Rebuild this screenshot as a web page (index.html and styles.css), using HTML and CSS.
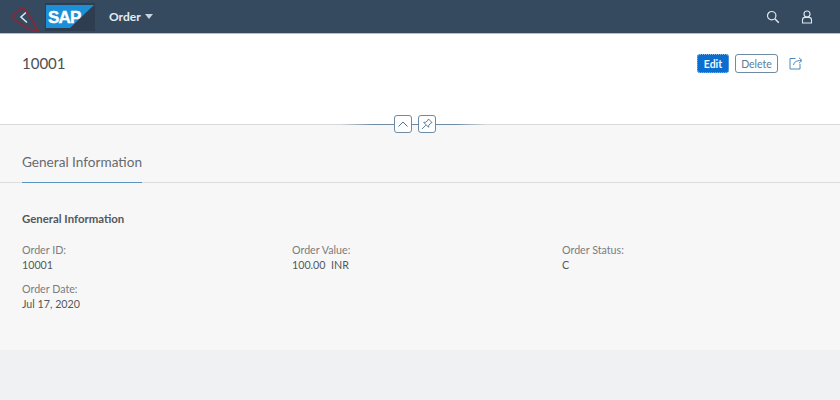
FILE: index.html
```html
<!DOCTYPE html>
<html lang="en">
<head>
<meta charset="utf-8">
<title>Order</title>
<link rel="stylesheet" href="styles.css">
</head>
<body>
<header class="shell">
  <div class="shell-left">
    <button class="back" aria-label="Back">
      <svg width="12" height="14" viewBox="0 0 12 14"><path d="M9 1.500 3 7l6 5.500" fill="none" stroke="#dbe6f0" stroke-width="1.600"/></svg>
      <svg class="scribble" width="28" height="26" viewBox="0 0 28 26"><path d="M1 10C4 6 7 3 12 1c4 2 9 12 15 23-8 0-16-5-26-14Z" fill="none" stroke="#7d2b3d" stroke-width="2" stroke-linejoin="round"/></svg>
    </button>
    <div class="logo">
      <svg width="48" height="23" viewBox="0 0 48 23"><path d="M0 0h48L24 23H0Z" fill="#1b8fd8"/></svg>
      <span class="logo-text">SAP</span>
    </div>
    <div class="app-title">Order <span class="caret"></span></div>
  </div>
  <div class="shell-right">
    <svg width="14" height="14" viewBox="0 0 14 14"><circle cx="5.700" cy="5.700" r="4.200" fill="none" stroke="#dfe6ee" stroke-width="1.200"/><path d="m8.800 8.800 4 4" stroke="#dfe6ee" stroke-width="1.600"/></svg>
    <svg width="12" height="14" viewBox="0 0 12 14"><circle cx="6" cy="4" r="3" fill="none" stroke="#dfe6ee" stroke-width="1.100"/><path d="M1.500 13V10q0-2.600 2.600-2.600h3.800q2.600 0 2.600 2.600v3Z" fill="none" stroke="#dfe6ee" stroke-width="1.100"/></svg>
  </div>
</header>
<section class="page-head">
  <div class="head-row">
    <h1 class="object-title">10001</h1>
    <div class="actions">
      <button class="btn btn-primary">Edit</button>
      <button class="btn btn-ghost">Delete</button>
      <svg class="share" width="14" height="14" viewBox="0 0 14 14"><path d="M6.500 2.500H1v10.500h10V8" fill="none" stroke="#4b88bd" stroke-width="1"/><path d="M4.500 9C5 6 7.500 4.500 12 4.500M10 1.800l3 2.700-3 2.700" fill="none" stroke="#4b88bd" stroke-width="1"/></svg>
    </div>
  </div>
  <div class="head-toggle">
    <span class="rule rule-left"></span>
    <button class="tgl" aria-label="Collapse"><svg width="12" height="8" viewBox="0 0 12 8"><path d="m1.500 6.500 4.500-4.500 4.500 4.500" fill="none" stroke="#4a7595" stroke-width="1"/></svg></button>
    <span class="rule rule-mid"></span>
    <button class="tgl" aria-label="Pin"><svg width="12" height="12" viewBox="0 0 12 12"><path d="M7.500 1 11 4.500 9.800 5 7.800 7.300 7.600 9.300 2.700 4.400 4.700 4.200 7 2.200ZM4.800 7.200 1 11" fill="none" stroke="#4a7595" stroke-width="0.900"/></svg></button>
    <span class="rule rule-right"></span>
  </div>
</section>
<main class="content">
  <nav class="tabs"><span class="tab">General Information</span></nav>
  <section class="section">
    <h2 class="section-title">General Information</h2>
    <div class="fields">
      <div class="field"><span class="label">Order ID:</span><span class="value">10001</span></div>
      <div class="field"><span class="label">Order Value:</span><span class="value">100.00&nbsp; INR</span></div>
      <div class="field"><span class="label">Order Status:</span><span class="value">C</span></div>
      <div class="field"><span class="label">Order Date:</span><span class="value">Jul 17, 2020</span></div>
    </div>
  </section>
</main>
</body>
</html>
```
FILE: styles.css
```css
* { box-sizing: border-box; }
html, body { margin: 0; height: 100%; }
body {
  background: #f0f1f3;
  font-family: "Lato", "Noto Sans", "Liberation Sans", sans-serif;
  color: #32363a;
  overflow: hidden;
}
button { font-family: inherit; padding: 0; }

.shell {
  height: 33px;
  background: #354a5f;
  display: flex;
  justify-content: space-between;
  align-items: center;
  padding-right: 27px;
}
.shell-left { display: flex; align-items: center; }
.shell-right { display: flex; align-items: center; gap: 21px; }

.back {
  position: relative;
  width: 45px;
  height: 33px;
  padding-left: 18px;
  border: 0;
  background: none;
  display: flex;
  align-items: center;
}
.scribble { position: absolute; left: 11px; top: 7px; }

.logo {
  position: relative;
  width: 50px;
  height: 28px;
  padding: 2px 0 0 1px;
  background: #2e3d50;
  line-height: 0;
}
.logo-text {
  position: absolute;
  left: 3px;
  top: 4px;
  font: 700 17px/21px "Liberation Sans", sans-serif;
  letter-spacing: -0.800px;
  -webkit-text-stroke: 0.400px #fff;
  color: #fff;
}

.app-title {
  margin-left: 14px;
  font-size: 12px;
  font-weight: 700;
  color: #e6ebf1;
  display: flex;
  align-items: center;
  gap: 4px;
}
.caret {
  width: 0;
  height: 0;
  border-left: 4px solid transparent;
  border-right: 4px solid transparent;
  border-top: 5px solid #c9d3dd;
}

.page-head {
  height: 92px;
  background: #fff;
  border-top: 1px solid #b5bec7;
  border-bottom: 1px solid #d9d9d9;
  padding: 0 37px 0 22px;
  display: flex;
  flex-direction: column;
  position: relative;
}
.head-row {
  display: flex;
  justify-content: space-between;
  align-items: center;
  height: 59px;
}
.object-title {
  margin: 0 0 2px;
  font-size: 15px;
  font-weight: 400;
  color: #4a4e53;
}
.actions { display: flex; align-items: center; gap: 6px; }
.btn {
  height: 19px;
  border-radius: 3px;
  font-size: 10.500px;
}
.btn-primary {
  width: 32px;
  background: #0a6ed1;
  color: #f2f7fc;
  font-weight: 700;
  border: 1px dotted #8fbce6;
}
.btn-ghost {
  width: 43px;
  background: #fff;
  color: #5c7d98;
  border: 1px solid #6f8ba3;
}
.share { margin-left: 5px; margin-bottom: 1px; }

.head-toggle {
  position: absolute;
  left: 0;
  top: 81px;
  width: 100%;
  display: flex;
  justify-content: center;
  align-items: center;
  height: 18px;
  padding-right: 14px;
}
.rule { height: 1px; background: #6f8ba3; }
.rule-left { width: 54px; background: linear-gradient(90deg, rgba(111,139,163,0), #6f8ba3 60%); }
.rule-right { width: 50px; background: linear-gradient(90deg, #6f8ba3 40%, rgba(111,139,163,0)); }
.rule-mid { width: 6px; }
.tgl {
  width: 18px;
  height: 18px;
  background: #fff;
  border: 1px solid #6f8ba3;
  border-radius: 3px;
  display: flex;
  align-items: center;
  justify-content: center;
}

.content {
  height: 225px;
  background: #f7f7f7;
}
.tabs {
  height: 58px;
  border-bottom: 1px solid #dcdddf;
  padding-left: 22px;
  display: flex;
}
.tab {
  height: 58px;
  padding-top: 28px;
  font-size: 13.600px;
  line-height: 18px;
  color: #666a70;
  border-bottom: 1px solid #5a94c0;
}
.section { padding: 29px 22px 0; }
.section-title {
  margin: 0 0 17px;
  font-size: 11.400px;
  line-height: 13px;
  font-weight: 700;
  color: #54585d;
}
.fields {
  display: grid;
  grid-template-columns: 270px 270px 1fr;
  row-gap: 9px;
}
.field { display: flex; flex-direction: column; font-size: 10.700px; line-height: 15px; }
.label { color: #7a7d80; }
.value { color: #54585c; }
```
